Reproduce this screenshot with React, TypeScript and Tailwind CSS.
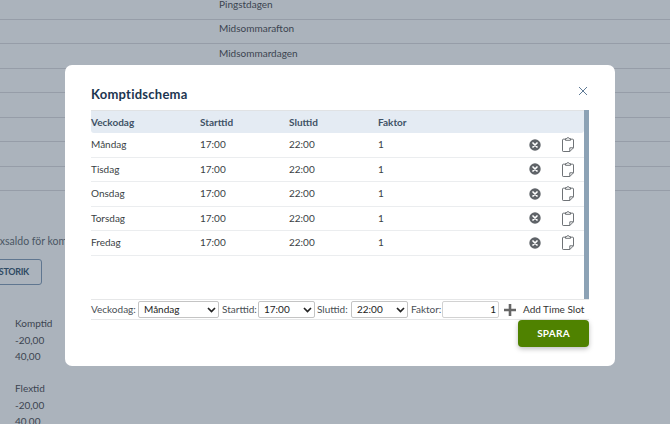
const F = { fontFamily: 'Lato, sans-serif' };

const bgRows = ["Pingstdagen", "Midsommarafton", "Midsommardagen", "", "", "", "", ""];
const days = ["Måndag", "Tisdag", "Onsdag", "Torsdag", "Fredag"];

function CircleX() {
  return (
    <svg width="12" height="12" viewBox="0 0 12 12">
      <circle cx="6" cy="6" r="5.7" fill="#5f6368" />
      <path d="M4 4l4 4M8 4l-4 4" stroke="#fff" strokeWidth="1.7" strokeLinecap="round" />
    </svg>
  );
}

function Clipboard() {
  return (
    <svg width="12" height="15" viewBox="0 0 12 15" fill="none" stroke="#5f6368" strokeWidth="0.9">
      <path d="M3.5 2.2H1.2c-.4 0-.7.3-.7.7v10.9c0 .4.3.7.7.7h6.6l3.7-3.7V2.9c0-.4-.3-.7-.7-.7H8.5" />
      <path d="M3.5 3.3V1.6h1.4C5 .9 5.4.5 6 .5s1 .4 1.1 1.1h1.4v1.7z" fill="#fff" />
      <path d="M7.8 14.5v-3.7h3.7" />
    </svg>
  );
}

function Chevron() {
  return (
    <svg width="9" height="6" viewBox="0 0 9 6" fill="none" stroke="#222" strokeWidth="1.7" className="shrink-0">
      <path d="M1 1l3.5 3.5L8 1" />
    </svg>
  );
}

function FakeSelect({ value, w }: { value: string; w: string }) {
  return (
    <div className={`${w} h-[17px] flex items-center justify-between pl-[5px] pr-[2px] border border-[#c4c4c4] rounded-[2px] bg-white text-[10px] text-[#222]`}>
      <span>{value}</span>
      <Chevron />
    </div>
  );
}

export default function App() {
  return (
    <div className="relative w-[670px] h-[424px] overflow-hidden bg-[#abb3bc] text-[10px] text-[#3b4450]" style={F}>
      <div className="flex flex-col">
        <div className="flex flex-col mt-[-5px]">
          {bgRows.map((t, i) => (
            <div key={i} className="h-[24.5px] border-b border-[#969da8] pl-[219px] pb-[5px] flex items-center">
              {t}
            </div>
          ))}
        </div>
        <div className="mt-[43px] ml-[-14px] text-[#4a5664] text-[10.5px] leading-[15px] whitespace-nowrap">Flexsaldo för kom</div>
        <div className="ml-[-30px] mt-[10px] w-[72px] h-[26px] border border-[#5f7690] rounded-[3px] flex items-center justify-end pr-[12px] text-[9px] tracking-[-0.3px] font-bold text-[#2f4a63]">
          HISTORIK
        </div>
        <div className="ml-[15px] mt-[30px] flex flex-col leading-[16.5px]">
          <span>Komptid</span>
          <span>-20,00</span>
          <span>40,00</span>
          <span className="mt-[15.5px]">Flextid</span>
          <span>-20,00</span>
          <span>40,00</span>
        </div>
      </div>

      <div className="absolute left-[65px] top-[65px] w-[550px] h-[301px] bg-white rounded-[7px] pl-[26px] pr-[26px] flex flex-col">
        <div className="h-[45px] flex items-start justify-between pt-[20px] relative">
          <h2 className="text-[13px] tracking-[0.25px] leading-[19px] font-bold text-[#1c3550]">Komptidschema</h2>
          <svg width="10" height="10" viewBox="0 0 10 10" className="absolute right-[1px] top-[21px]" stroke="#5f7a96" strokeWidth="1" fill="none">
            <path d="M1 1l8 8M9 1l-8 8" />
          </svg>
        </div>

        <div className="h-[189px] flex">
          <div className="flex-1 flex flex-col">
            <div className="h-[23px] flex items-center bg-[#e4ebf3] border-t border-[#e0e2e4] rounded-b-[3px] text-[#3f5266] font-bold">
              <span className="w-[109px]">Veckodag</span>
              <span className="w-[89px]">Starttid</span>
              <span className="w-[89px]">Sluttid</span>
              <span>Faktor</span>
            </div>
            {days.map((d) => (
              <div key={d} className="h-[24.5px] flex items-center border-b border-[#ebedef] text-[#3a3f45]">
                <span className="w-[109px]">{d}</span>
                <span className="w-[89px]">17:00</span>
                <span className="w-[89px]">22:00</span>
                <span className="w-[151px]">1</span>
                <span className="w-[33px] flex"><CircleX /></span>
                <span className="flex"><Clipboard /></span>
              </div>
            ))}
          </div>
          <div className="w-[5px] bg-[#8ca2b5]" />
        </div>

        <div className="h-[21px] flex items-center border-y border-[#e6e7e8] text-[#4a4f55]">
          <span className="w-[47px]">Veckodag:</span>
          <FakeSelect value="Måndag" w="w-[81px]" />
          <span className="w-[39px] pl-[3px]">Starttid:</span>
          <FakeSelect value="17:00" w="w-[57px]" />
          <span className="w-[36px] pl-[2px]">Sluttid:</span>
          <FakeSelect value="22:00" w="w-[57px]" />
          <span className="w-[34px] pl-[3px]">Faktor:</span>
          <div className="w-[57px] h-[17px] border border-[#d2d2d2] rounded-[2px] flex items-center justify-end pr-[2px] text-[#222]">1</div>
          <svg width="12" height="12" viewBox="0 0 12 12" className="ml-[5px]" fill="#666">
            <path d="M4.7 0h2.6v4.7H12v2.6H7.3V12H4.7V7.3H0V4.7h4.7z" />
          </svg>
          <span className="ml-[7px] text-[#333] whitespace-nowrap">Add Time Slot</span>
        </div>

        <div className="flex justify-end">
          <button className="w-[71px] h-[27px] rounded-[4px] bg-[#4f8200] text-white text-[10px] tracking-[0.25px] font-bold shadow-[0_2px_5px_rgba(0,0,0,0.25)]">SPARA</button>
        </div>
      </div>
    </div>
  );
}
